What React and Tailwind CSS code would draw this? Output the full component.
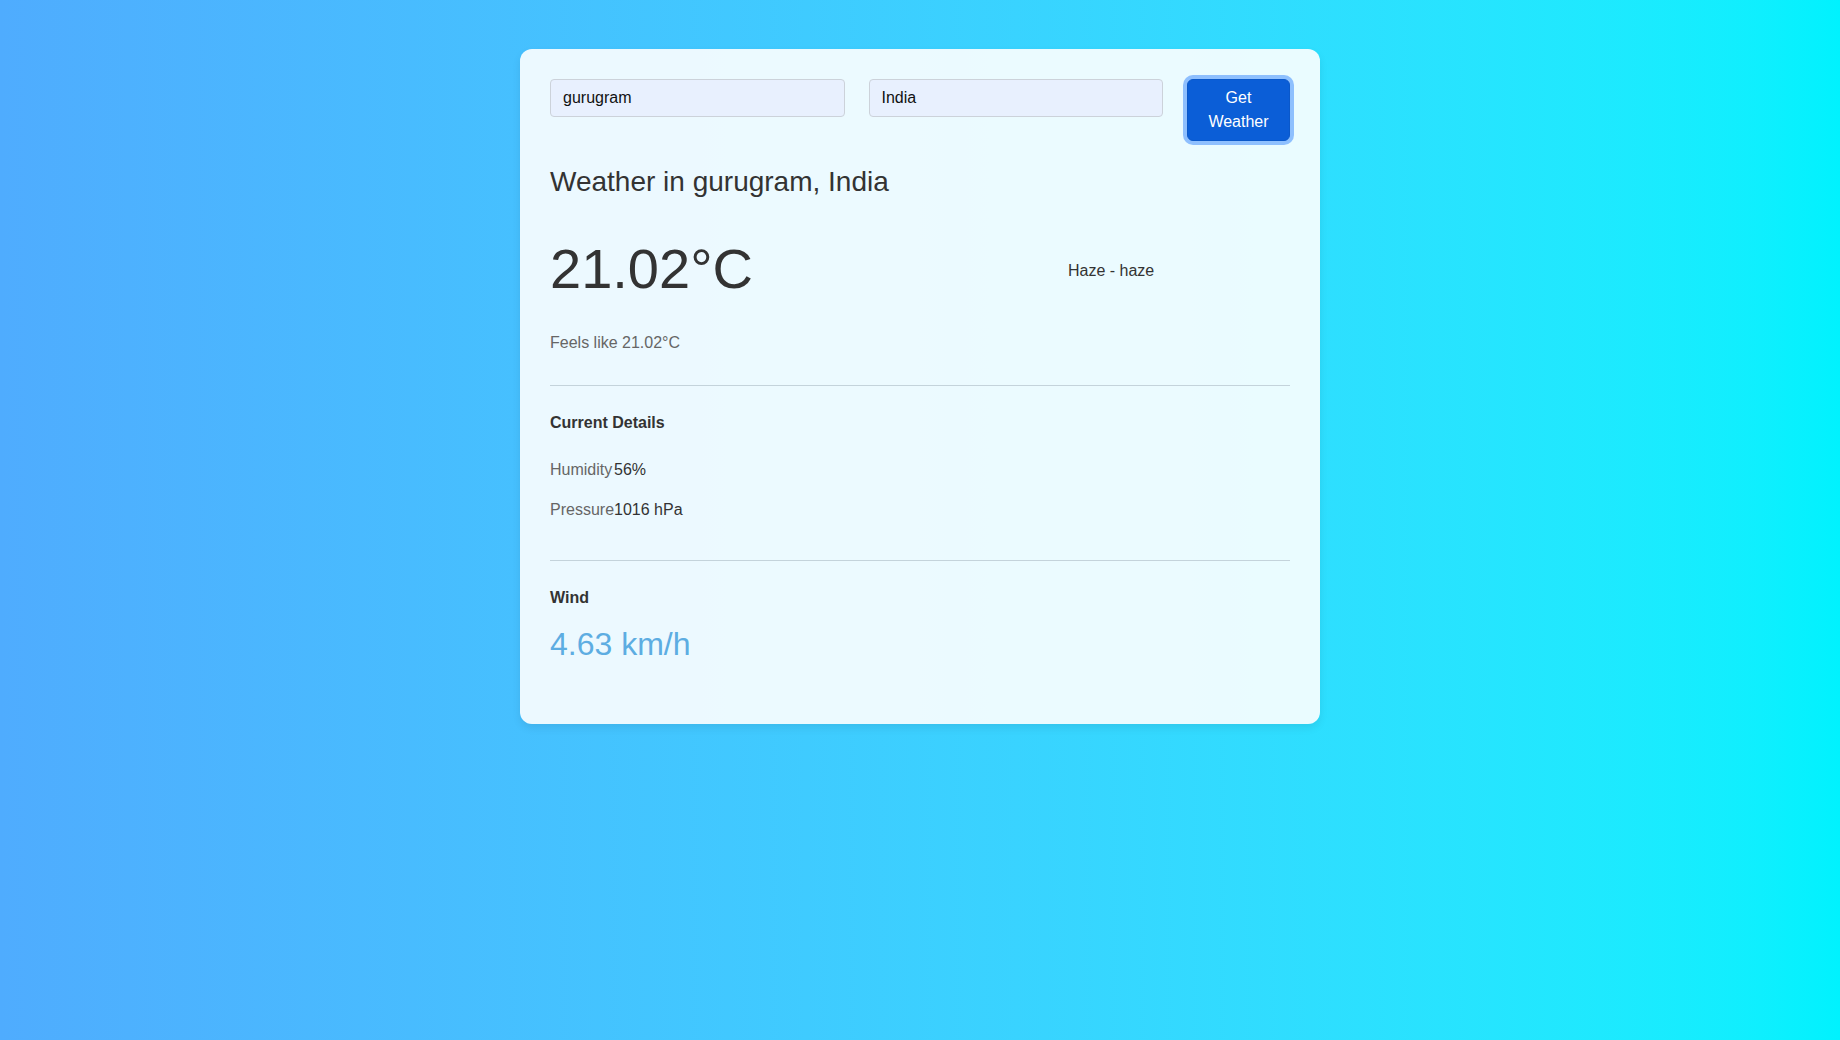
import { useState } from 'react';

const App = () => {
  const [city, setCity] = useState('gurugram');
  const [country, setCountry] = useState('India');

  return (
    <div className="min-h-[1040px] w-full bg-gradient-to-r from-[#4facfe] to-[#00f2fe] pt-[49px] font-['Liberation_Sans',Arial,sans-serif]">
      <div className="mx-auto w-[800px] rounded-xl bg-white/90 px-[30px] pb-[62px] pt-[30px] shadow-[0_4px_8px_rgba(0,0,0,0.08)]">
        {/* search row */}
        <div className="flex items-start gap-6">
          <input
            type="text"
            value={city}
            onChange={(e) => setCity(e.target.value)}
            className="h-[38px] min-w-0 flex-1 rounded border border-[#ccd2da] bg-[#e8f0fe] px-3 text-base text-[#111] outline-none"
          />
          <input
            type="text"
            value={country}
            onChange={(e) => setCountry(e.target.value)}
            className="h-[38px] min-w-0 flex-1 rounded border border-[#ccd2da] bg-[#e8f0fe] px-3 text-base text-[#111] outline-none"
          />
          <button className="h-[62px] w-[103px] shrink-0 rounded-md border border-[#0a58ca] bg-[#0b5ed7] px-3 text-base leading-6 text-white shadow-[0_0_0_4px_rgba(49,132,253,0.5)]">
            Get Weather
          </button>
        </div>

        <h2 className="mt-[25px] text-[28px] leading-8 text-[#333]">Weather in gurugram, India</h2>

        <div className="mt-[39px] flex h-16 items-center">
          <div className="flex-1 text-[56px] leading-[64px] text-[#333]">21.02°C</div>
          <div className="w-[222px] pt-1 text-base text-[#333]">Haze - haze</div>
        </div>

        <p className="mt-[33px] text-base leading-[18px] text-[#666]">Feels like 21.02°C</p>

        <div className="mt-[33px] border-t border-[#c4d3db]" />

        <h3 className="mt-[28px] text-base font-bold leading-[18px] text-[#333]">Current Details</h3>
        <div className="mt-[29px] grid grid-cols-[auto_1fr] gap-y-[22px] text-base leading-[18px]">
          <span className="text-[#666]">Humidity</span>
          <span className="text-[#333]">56%</span>
          <span className="text-[#666]">Pressure</span>
          <span className="text-[#333]">1016 hPa</span>
        </div>

        <div className="mt-[41px] border-t border-[#c4d3db]" />

        <h3 className="mt-[28px] text-base font-bold leading-[18px] text-[#333]">Wind</h3>
        <div className="mt-[19px] text-[32px] leading-9 text-[#5dade2]">4.63 km/h</div>
      </div>
    </div>
  );
};

export default App;
